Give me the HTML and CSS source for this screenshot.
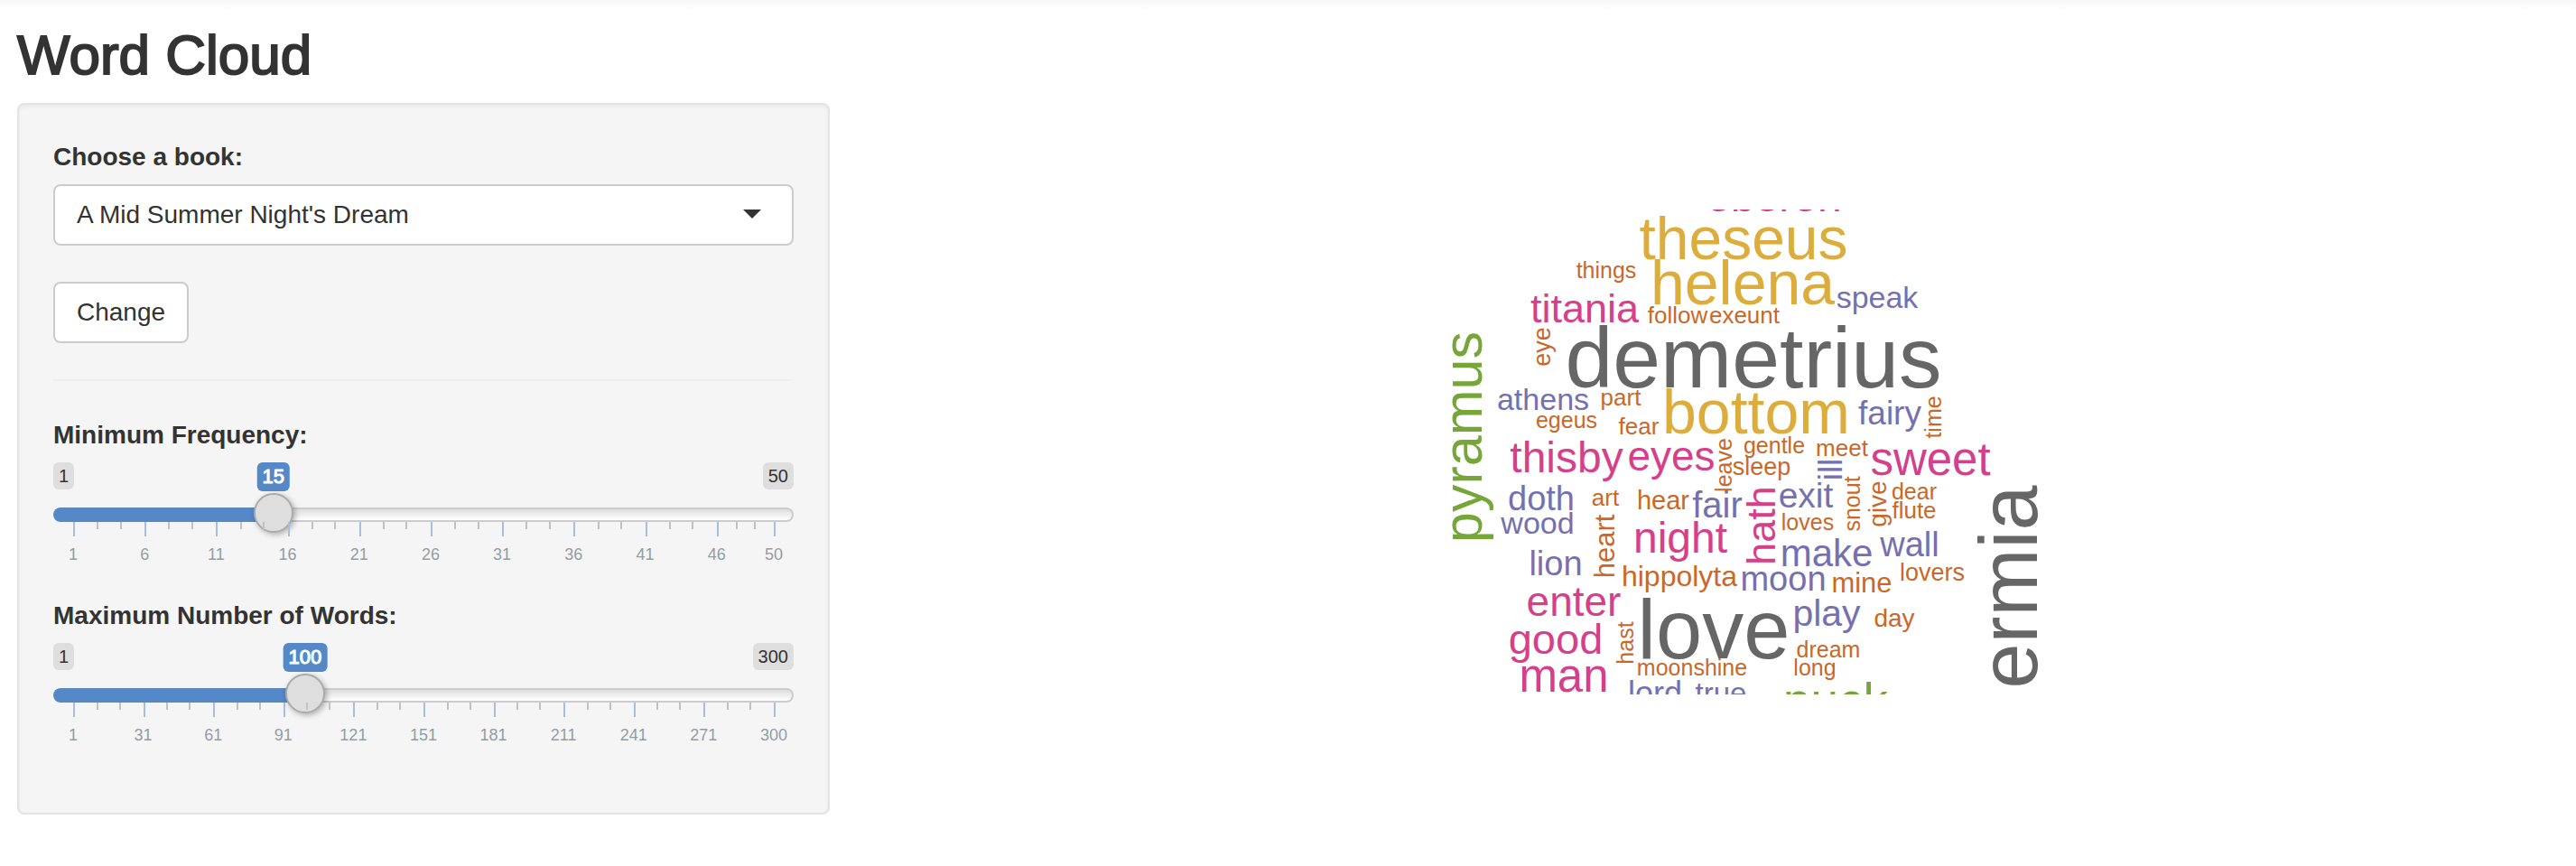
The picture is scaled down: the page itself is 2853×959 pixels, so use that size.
FILE: index.html
```html
<!DOCTYPE html>
<html lang="en">
<head>
<meta charset="utf-8">
<title>Word Cloud</title>
<link rel="stylesheet" href="styles.css">
</head>
<body>
<div class="page">
  <h1 class="title">Word Cloud</h1>
  <div class="row">
    <form class="sidebar">
      <label class="label" for="book">Choose a book:</label>
      <div class="select-wrap">
        <select class="control select" id="book">
          <option>A Mid Summer Night's Dream</option>
          <option>The Merchant of Venice</option>
          <option>Romeo and Juliet</option>
        </select>
      </div>
      <button class="control button" type="button">Change</button>
      <hr class="rule">

      <label class="label" for="freq">Minimum Frequency:</label>
      <div class="slider" style="--value: 0.2857">
        <div class="badges"><span class="badge">1</span><span class="badge">50</span></div>
        <output class="value" for="freq">15</output>
        <input class="range" id="freq" type="range" min="1" max="50" value="15">
        <ul class="ticks">
          <li class="tick"><span>1</span></li>
          <li class="tick"><span>6</span></li>
          <li class="tick"><span>11</span></li>
          <li class="tick"><span>16</span></li>
          <li class="tick"><span>21</span></li>
          <li class="tick"><span>26</span></li>
          <li class="tick"><span>31</span></li>
          <li class="tick"><span>36</span></li>
          <li class="tick"><span>41</span></li>
          <li class="tick short"><span>46</span></li>
          <li class="tick end"><span>50</span></li>
        </ul>
      </div>

      <label class="label" for="max">Maximum Number of Words:</label>
      <div class="slider" style="--value: 0.3311">
        <div class="badges"><span class="badge">1</span><span class="badge">300</span></div>
        <output class="value" for="max">100</output>
        <input class="range" id="max" type="range" min="1" max="300" value="100">
        <ul class="ticks">
          <li class="tick"><span>1</span></li>
          <li class="tick"><span>31</span></li>
          <li class="tick"><span>61</span></li>
          <li class="tick"><span>91</span></li>
          <li class="tick"><span>121</span></li>
          <li class="tick"><span>151</span></li>
          <li class="tick"><span>181</span></li>
          <li class="tick"><span>211</span></li>
          <li class="tick"><span>241</span></li>
          <li class="tick"><span>271</span></li>
          <li class="tick end"><span>300</span></li>
        </ul>
      </div>
    </form>

    <main class="main">
      <svg class="cloud" viewBox="49 32 720 537" role="img" aria-label="Word cloud">
        <g class="gray">
          <text x="442" y="229" font-size="95">demetrius</text>
          <text x="398" y="529" font-size="92">love</text>
          <text transform="translate(756 450) rotate(-90)" font-size="90">ermia</text>
        </g>
        <g class="yellow">
          <text x="431" y="87" font-size="66">theseus</text>
          <text x="430" y="137" font-size="68">helena</text>
          <text x="445" y="280" font-size="68">bottom</text>
        </g>
        <g class="green">
          <text transform="translate(141 284) rotate(-90)" font-size="61">pyramus</text>
          <text x="533" y="595" font-size="55">puck</text>
        </g>
        <g class="pink">
          <text x="465" y="34" font-size="48">oberon</text>
          <text x="255" y="157" font-size="45">titania</text>
          <text x="235" y="323" font-size="48">thisby</text>
          <text x="351" y="321" font-size="46">eyes</text>
          <text x="638" y="326" font-size="51">sweet</text>
          <text x="361" y="412" font-size="48">night</text>
          <text transform="translate(466 382) rotate(-90)" font-size="45">hath</text>
          <text x="243" y="482" font-size="46">enter</text>
          <text x="223" y="524" font-size="47">good</text>
          <text x="232" y="566" font-size="51">man</text>
        </g>
        <g class="purple">
          <text x="579" y="141" font-size="34">speak</text>
          <text x="209" y="254" font-size="34">athens</text>
          <text x="593" y="270" font-size="37">fairy</text>
          <text transform="translate(540 320) rotate(-90)" font-size="37">ill</text>
          <text x="207" y="365" font-size="38">doth</text>
          <text x="203" y="391" font-size="34">wood</text>
          <text x="402" y="373" font-size="40">fair</text>
          <text x="500" y="362" font-size="39">exit</text>
          <text x="523" y="427" font-size="42">make</text>
          <text x="615" y="416" font-size="38">wall</text>
          <text x="223" y="437" font-size="38">lion</text>
          <text x="475" y="454" font-size="38">moon</text>
          <text x="523" y="493" font-size="41">play</text>
          <text x="333" y="580" font-size="36">lord</text>
          <text x="406" y="579" font-size="33">true</text>
        </g>
        <g class="orange">
          <text x="279" y="108" font-size="25">things</text>
          <text x="358" y="158" font-size="26">follow</text>
          <text x="432" y="158" font-size="26">exeunt</text>
          <text transform="translate(217 184) rotate(-90)" font-size="27">eye</text>
          <text x="295" y="249" font-size="26">part</text>
          <text x="235" y="274" font-size="25">egeus</text>
          <text x="315" y="281" font-size="26">fear</text>
          <text transform="translate(650 262) rotate(-90)" font-size="25">time</text>
          <text x="465" y="302" font-size="25">gentle</text>
          <text transform="translate(418 315) rotate(-90)" font-size="25">leave</text>
          <text x="451" y="326" font-size="27">sleep</text>
          <text x="540" y="305" font-size="26">meet</text>
          <text x="278" y="360" font-size="26">art</text>
          <text x="342" y="364" font-size="29">hear</text>
          <text transform="translate(288 405) rotate(-90)" font-size="31">heart</text>
          <text x="502" y="387" font-size="25">loves</text>
          <text transform="translate(560 358) rotate(-90)" font-size="25">snout</text>
          <text transform="translate(589 358) rotate(-90)" font-size="28">give</text>
          <text x="620" y="353" font-size="25">dear</text>
          <text x="620" y="374" font-size="26">flute</text>
          <text x="360" y="449" font-size="32">hippolyta</text>
          <text x="562" y="456" font-size="31">mine</text>
          <text x="640" y="443" font-size="27">lovers</text>
          <text transform="translate(309 512) rotate(-90)" font-size="25">hast</text>
          <text x="374" y="548" font-size="25">moonshine</text>
          <text x="598" y="494" font-size="28">day</text>
          <text x="525" y="528" font-size="25">dream</text>
          <text x="510" y="548" font-size="25">long</text>
        </g>
      </svg>
    </main>
  </div>
</div>
</body>
</html>
```

FILE: styles.css
```css
* {
  box-sizing: border-box;
}

body {
  margin: 0;
  background: #fff linear-gradient(#f8f8f8, #fefefe 10px, #fff 12px) no-repeat;
  color: #333;
  font-family: "Liberation Sans", Arial, sans-serif;
  font-size: 28px;
  line-height: 40px;
}

.page {
  padding: 28px 14px 28px 19px;
}

.title {
  margin: 0 0 20px;
  font-size: 62px;
  font-weight: 400;
  line-height: 66px;
  -webkit-text-stroke: 2px #333;
}

.row {
  display: flex;
  align-items: flex-start;
  gap: 60px;
}

.sidebar {
  flex: none;
  width: calc(100% / 3 - 40px);
  padding: 38px;
  background: #f5f5f5;
  border: 2px solid #e3e3e3;
  border-radius: 8px;
  box-shadow: inset 0 2px 4px rgba(0, 0, 0, 0.05);
}

.label {
  display: block;
  margin-bottom: 10px;
  font-weight: 700;
}

.control {
  height: 68px;
  padding: 0 24px;
  background: #fff;
  border: 2px solid #ccc;
  border-radius: 8px;
  color: #333;
  font: inherit;
}

.select-wrap {
  position: relative;
  margin-bottom: 40px;
}

.select-wrap::after {
  content: "";
  position: absolute;
  top: 28px;
  right: 36px;
  border: 10px solid transparent;
  border-top-color: #333;
  border-bottom: 0;
  pointer-events: none;
}

.select {
  display: block;
  width: 100%;
  appearance: none;
}

.button {
  display: block;
}

.rule {
  margin: 40px 0;
  border: 0;
  border-top: 2px solid #eee;
}

.slider {
  --thumb: calc(22px + (100% - 44px) * var(--value));
  position: relative;
  height: 120px;
  margin-bottom: 30px;
}

.badges {
  display: flex;
  justify-content: space-between;
  margin-bottom: 20px;
}

.badge {
  padding: 0 6px;
  background: #dedede;
  border-radius: 6px;
  font-size: 20px;
  line-height: 30px;
}

.value {
  position: absolute;
  top: 0;
  left: var(--thumb);
  padding: 0 6px;
  transform: translateX(-50%);
  background: #5488c7;
  border-radius: 6px;
  color: #fff;
  font-size: 22px;
  line-height: 32px;
  -webkit-text-stroke: 1px #fff;
}

.range {
  display: block;
  width: 100%;
  height: 16px;
  margin: 0;
  appearance: none;
  border: 2px solid transparent;
  border-radius: 16px;
  background:
    linear-gradient(#5488c7, #5488c7) 0 0 / var(--thumb) 100% no-repeat border-box,
    linear-gradient(#dedede, #fff) padding-box,
    #ccc;
}

.range::-webkit-slider-runnable-track {
  height: 16px;
  margin: 0 -2px;
}

.range::-webkit-slider-thumb {
  width: 44px;
  height: 44px;
  margin-top: -16px;
  appearance: none;
  background: #dedede;
  border: 2px solid #ababab;
  border-radius: 50%;
  box-shadow: 2px 2px 6px rgba(0, 0, 0, 0.3);
}

.ticks {
  display: flex;
  margin: 0 20px 0 22px;
  padding: 0;
  list-style: none;
}

.tick {
  flex: 30 1 0;
  padding-top: 30px;
  background:
    linear-gradient(#a5bfe0, #a5bfe0) 0 0 / 2px 16px no-repeat,
    linear-gradient(#c2c2c2, #c2c2c2) 34% 0 / 2px 8px no-repeat,
    linear-gradient(#c2c2c2, #c2c2c2) 67% 0 / 2px 8px no-repeat;
}

.tick.short {
  flex-grow: 24;
}

.tick.end {
  flex: 0 0 2px;
  background: linear-gradient(#a5bfe0, #a5bfe0) 0 0 / 2px 16px no-repeat;
}

.tick span {
  display: flex;
  justify-content: center;
  width: 0;
  color: #929da6;
  font-size: 18px;
  line-height: 12px;
}

.main {
  flex: 1;
  display: flex;
  justify-content: center;
  padding-top: 118px;
}

.cloud {
  width: 720px;
  max-width: 100%;
  overflow: hidden;
  text-anchor: middle;
}

.gray { fill: #666; }
.yellow { fill: #ddad3b; }
.green { fill: #76a63a; }
.pink { fill: #d63f8a; }
.purple { fill: #7570b0; }
.orange { fill: #ca6829; }
```
